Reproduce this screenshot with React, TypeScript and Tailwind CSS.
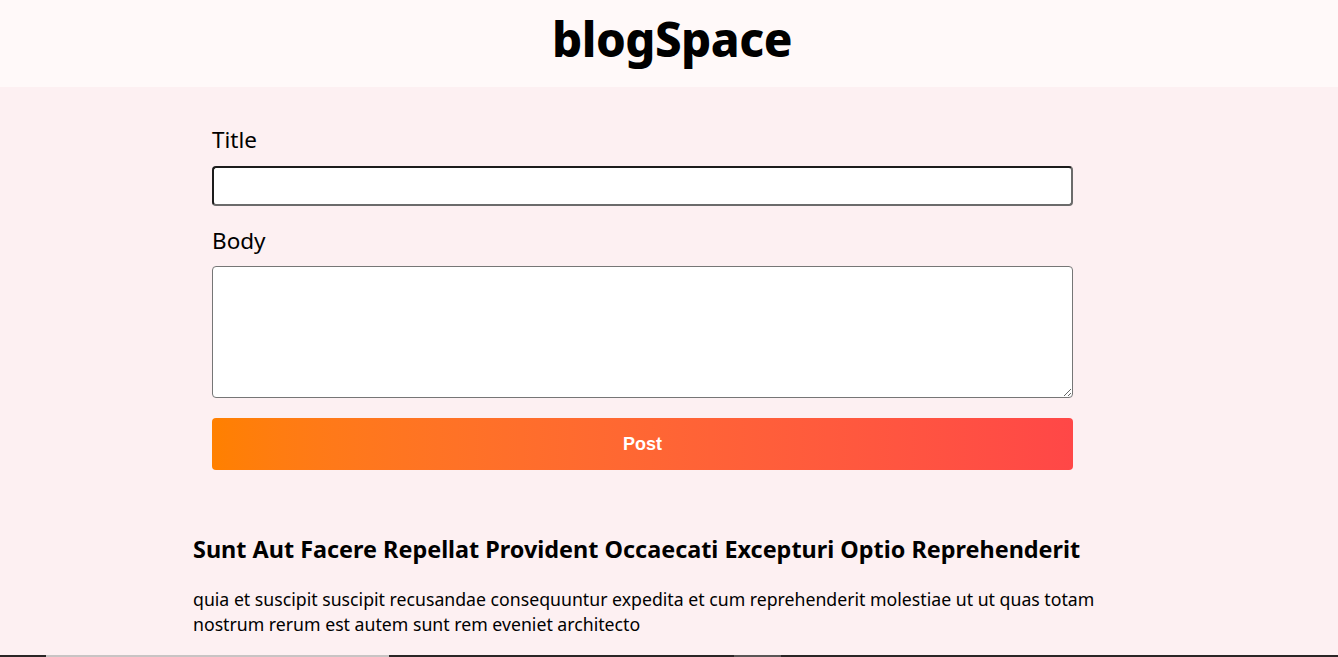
import { useState } from "react"

const posts = [
  {
    title: "Sunt Aut Facere Repellat Provident Occaecati Excepturi Optio Reprehenderit",
    body: "quia et suscipit suscipit recusandae consequuntur expedita et cum reprehenderit molestiae ut ut quas totam nostrum rerum est autem sunt rem eveniet architecto",
  },
]

export default function App() {
  const [title, setTitle] = useState("")
  const [body, setBody] = useState("")

  return (
    <div className="min-h-screen bg-[#fdf0f2] font-['Noto_Sans',sans-serif] text-black">
      {/* Header */}
      <header className="h-[87px] pb-[10px] bg-[#fff9f9] flex items-center justify-center">
        <h1 className="text-[47.4px] font-extrabold tracking-[-0.5px] leading-none ml-[6px]">blogSpace</h1>
      </header>

      <main className="w-[952px] mx-auto">
        {/* New post form */}
        <form className="ml-[19px] w-[861px] pt-[38px] flex flex-col" onSubmit={(e) => e.preventDefault()}>
          <label htmlFor="title" className="text-[22.5px] leading-[30px]">Title</label>
          <input
            id="title"
            value={title}
            onChange={(e) => setTitle(e.target.value)}
            className="mt-[11px] h-[40px] bg-white rounded-[4px] border-2 border-t-[#1c1c1c] border-l-[#1c1c1c] border-r-[#6b6b6b] border-b-[#6b6b6b] px-2 outline-none"
          />
          <label htmlFor="body" className="mt-[20px] text-[22.5px] leading-[30px]">Body</label>
          <textarea
            id="body"
            value={body}
            onChange={(e) => setBody(e.target.value)}
            className="mt-[10px] h-[132px] bg-white rounded-[4px] border border-[#767676] p-2 outline-none"
          />
          <button
            type="submit"
            className="mt-[20px] h-[52px] rounded-[4px] bg-gradient-to-r from-[#ff8000] to-[#ff4747] text-white text-[18px] font-bold font-['Liberation_Sans',sans-serif]"
          >
            Post
          </button>
        </form>

        {/* Posts */}
        <section className="mt-[64px]">
          {posts.map((post, i) => (
            <article key={i}>
              <h2 className="text-[23.4px] font-bold leading-[30px]">{post.title}</h2>
              <p className="mt-[23px] text-[17.7px] leading-[25px]">{post.body}</p>
            </article>
          ))}
        </section>
      </main>

      <div className="mt-[18px] flex h-[2px]">
        <div className="w-[46px] bg-[#2a2626]" />
        <div className="w-[343px] bg-[#c8c4c4]" />
        <div className="w-[345px] bg-[#2a2626]" />
        <div className="w-[47px] bg-[#5a5656]" />
        <div className="flex-1 bg-[#2a2626]" />
      </div>
    </div>
  )
}
